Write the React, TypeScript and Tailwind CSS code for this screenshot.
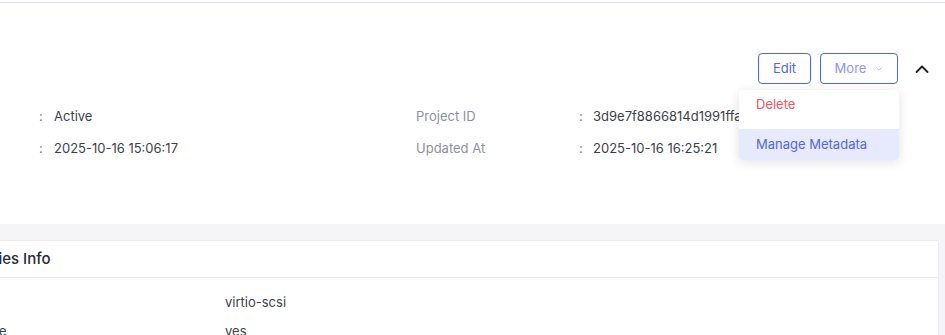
import { useState } from "react";

const info = [
  { label: "Status", value: "Active", label2: "Project ID", value2: "3d9e7f8866814d1991ffa0c2b7e4d5a1" },
  { label: "Created At", value: "2025-10-16 15:06:17", label2: "Updated At", value2: "2025-10-16 16:25:21" },
];

const props = [
  { key: "SCSI Model", value: "virtio-scsi" },
  { key: "Require Quiesce", value: "yes" },
];

function ChevronDown() {
  return (
    <svg width="8" height="8" viewBox="0 0 10 10" fill="none">
      <path d="M2 3.5 5 6.5 8 3.5" stroke="currentColor" strokeWidth="1.1" strokeLinecap="round" strokeLinejoin="round" />
    </svg>
  );
}

function ChevronUp() {
  return (
    <svg width="14" height="14" viewBox="0 0 14 14" fill="none">
      <path d="M1.5 10 7 4.5 12.5 10" stroke="#1f1f1f" strokeWidth="1.8" strokeLinecap="round" strokeLinejoin="round" />
    </svg>
  );
}

export default function App() {
  const [open] = useState(true);

  return (
    <div className="w-[945px] h-[335px] overflow-hidden bg-white font-['Inter','Liberation_Sans',sans-serif]">
      <div className="h-[2px] bg-white" />
      <div className="border-t border-[#e3e2ec]">
        {/* header section */}
        <div className="h-[221px] bg-white">
          <div className="flex justify-end items-center pt-[50px] pr-[15px]">
            <button className="h-[31px] w-[53px] rounded-[4px] border border-[#4c66e8] text-[13px] text-[#5068e0] bg-white">
              Edit
            </button>
            <div className="relative ml-[9px]">
              <button className="h-[31px] w-[78px] rounded-[4px] border border-[#4c66e8] text-[13px] text-[#8a98f2] bg-white flex items-center justify-center gap-[9px]">
                <span>More</span>
                <span className="text-[#a3aef4]"><ChevronDown /></span>
              </button>
              {open && (
                <div className="absolute right-[-1px] top-[37px] w-[160px] bg-white rounded-[4px] shadow-[0_2px_12px_rgba(0,0,0,0.12)] z-10 overflow-hidden text-[13px]">
                  <div className="h-[39px] pb-[9px] flex items-center px-[17px] text-[#f2545b]">Delete</div>
                  <div className="h-[31px] flex items-center px-[17px] bg-[#e7eafc] text-[#5268d8]">Manage Metadata</div>
                </div>
              )}
            </div>
            <button className="ml-[15px] w-[17px] h-[31px] flex items-center justify-center">
              <ChevronUp />
            </button>
          </div>

          <div className="-ml-[124px] mt-[17px] grid grid-cols-[540px_540px] text-[13px]">
            {info.map((row) => (
              <>
                <div key={row.label} className="h-[32px] flex items-center">
                  <span className="w-[163px] text-[#8b90a0]">{row.label}</span>
                  <span className="w-[15px] text-[#6b7080]">:</span>
                  <span className="text-[#3b3f4a]">{row.value}</span>
                </div>
                <div key={row.label2} className="h-[32px] flex items-center">
                  <span className="w-[163px] text-[#8b90a0]">{row.label2}</span>
                  <span className="w-[14px] text-[#6b7080]">:</span>
                  <span className="text-[#3b3f4a] whitespace-nowrap">{row.value2}</span>
                </div>
              </>
            ))}
          </div>
        </div>

        {/* gray body */}
        <div className="bg-[#f5f5f7] pt-[16px] pr-[6px] h-[200px]">
          <div className="-ml-[110px] bg-white border border-[#ebebee] rounded-[2px]">
            <div className="h-[37px] flex items-center pl-[54px] border-b border-[#ebebee] text-[15px] font-medium text-[#262a33] whitespace-nowrap">
              Properties Info
            </div>
            <div className="pt-[10px] pl-[15px] text-[13px] text-[#3b3f4a]">
              {props.map((p) => (
                <div key={p.key} className="h-[29px] flex items-center">
                  <span className="w-[319px] text-[#3b3f4a] whitespace-nowrap">{p.key}</span>
                  <span>{p.value}</span>
                </div>
              ))}
            </div>
          </div>
        </div>
      </div>
    </div>
  );
}
